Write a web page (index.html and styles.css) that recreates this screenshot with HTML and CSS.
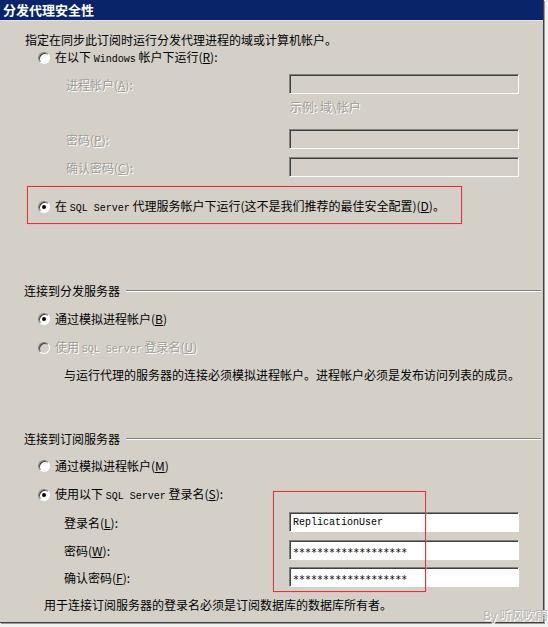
FILE: index.html
```html
<html>
	<head>
		<meta charset="utf-8">
		<title>分发代理安全性</title>
		<link rel="stylesheet" href="styles.css">
	</head>
	<body>
		<div class="dialog">
			<div class="caption">分发代理安全性</div>
			<div class="content">
				<div class="row intro">指定在同步此订阅时运行分发代理进程的域或计算机帐户。</div>
				<div class="row radio sub"><span class="dot"></span><span>在以下 <span class="en">Windows</span> 帐户下运行(<u>R</u>):</span></div>
				<div class="field first gap8"><span class="lbl off">进程帐户(<u>A</u>):</span><span class="box"></span></div>
				<div class="row hint off">示例: 域\帐户</div>
				<div class="field first gap14"><span class="lbl off">密码(<u>P</u>):</span><span class="box"></span></div>
				<div class="field first gap8"><span class="lbl off">确认密码(<u>C</u>):</span><span class="box"></span></div>
				<div class="mark agent">
					<div class="row radio checked"><span class="dot"></span><span>在 <span class="en">SQL Server</span> 代理服务帐户下运行(这不是我们推荐的最佳安全配置)(<u>D</u>)。</span></div>
				</div>

				<div class="row group dist">连接到分发服务器</div>
				<div class="row radio checked gap12"><span class="dot"></span><span>通过模拟进程帐户(<u>B</u>)</span></div>
				<div class="row radio disabled gap13"><span class="dot"></span><span class="off">使用 <span class="en">SQL Server</span> 登录名(<u>U</u>)</span></div>
				<div class="row note">与运行代理的服务器的连接必须模拟进程帐户。进程帐户必须是发布访问列表的成员。</div>

				<div class="row group subs">连接到订阅服务器</div>
				<div class="row radio gap11"><span class="dot"></span><span>通过模拟进程帐户(<u>M</u>)</span></div>
				<div class="row radio checked gap13"><span class="dot"></span><span>使用以下 <span class="en">SQL Server</span> 登录名(<u>S</u>):</span></div>
				<div class="field second gap9"><span class="lbl">登录名(<u>L</u>):</span><span class="box on">ReplicationUser</span></div>
				<div class="field second gap8"><span class="lbl">密码(<u>W</u>):</span><span class="box on secret">*******************</span></div>
				<div class="field second gap7"><span class="lbl">确认密码(<u>F</u>):</span><span class="box on secret">*******************</span></div>
				<div class="row footnote">用于连接订阅服务器的登录名必须是订阅数据库的数据库所有者。</div>
			</div>
			<div class="mark login"></div>
		</div>
		<div class="sign">By 听风吹雨</div>
	</body>
</html>
```

FILE: styles.css
```css
body,html{
	margin:0;
	background:#f2f2f0;
	font-family:"Noto Sans CJK SC", "DejaVu Sans", sans-serif;
	font-size:12px;
	color:#000;
}
.dialog{
	position:relative;
	width:543px;
	height:622px;
	background:#d4d0c8;
	border-right:1px solid #404040;
	border-bottom:1px solid #404040;
	box-shadow:1px 1px 0 #9a9a9a;
}
.caption{
	height:20px;
	line-height:20px;
	padding-left:3px;
	background:#0a246a;
	color:#fff;
	font-weight:bold;
	font-size:13px;
	border-bottom:1px solid #e6e4df;
}
.content{
	display:flex;
	flex-direction:column;
	align-items:flex-start;
}
.row{
	height:16px;
	line-height:16px;
	white-space:nowrap;
}
.en{
	font-family:"Liberation Mono", monospace;
	font-size:10px;
}
.off{
	color:#a09d96;
	text-shadow:1px 1px 0 #fff;
}
.intro{
	margin:11px 0 0 25px;
}
.sub{
	margin-top:2px;
}
.radio{
	display:flex;
	align-items:center;
	margin-left:38px;
}
.dot{
	position:relative;
	flex:none;
	width:12px;
	height:12px;
	margin-right:5px;
	box-sizing:border-box;
	border-radius:50%;
	background:#fff;
	border:1px solid;
	border-color:#808080 #fff #fff #808080;
	box-shadow:inset 1px 1px 0 #404040;
}
.disabled .dot{
	background:#d4d0c8;
}
.checked .dot::after{
	content:"";
	position:absolute;
	left:3px;
	top:3px;
	width:4px;
	height:4px;
	border-radius:50%;
	background:#000;
}
.field{
	display:flex;
	align-items:center;
	height:20px;
}
.field.first{
	margin-left:66px;
}
.field.first .lbl{
	width:223px;
}
.field.second{
	margin-left:64px;
}
.field.second .lbl{
	width:225px;
}
.box{
	width:230px;
	height:20px;
	box-sizing:border-box;
	border:1px solid;
	border-color:#808080 #fff #fff #808080;
	box-shadow:inset 1px 1px 0 #404040;
	padding:2px 0 0 3px;
	line-height:16px;
	font-family:"Liberation Mono", monospace;
	font-size:10px;
}
.box.on{
	background:#fff;
}
.box.secret{
	font-family:"DejaVu Sans Mono", monospace;
	font-size:10px;
	padding-top:4px;
}
.hint{
	margin:5px 0 0 290px;
}
.gap7{ margin-top:7px; }
.gap8{ margin-top:8px; }
.gap9{ margin-top:9px; }
.gap11{ margin-top:11px; }
.gap12{ margin-top:12px; }
.gap13{ margin-top:13px; }
.gap14{ margin-top:14px; }
.mark{
	border:1px solid #e1333b;
	box-shadow:0 0 2px #f3a5a8;
	box-sizing:border-box;
}
.agent{
	display:flex;
	align-items:center;
	width:435px;
	height:38px;
	margin:9px 0 0 27px;
	padding-top:4px;
}
.agent .radio{
	margin-left:10px;
}
.login{
	position:absolute;
	left:273px;
	top:491px;
	width:153px;
	height:101px;
}
.group{
	display:flex;
	align-items:center;
	align-self:stretch;
	margin:0 2px 0 24px;
}
.group::after{
	content:"";
	flex:1;
	margin-left:6px;
	border-top:1px solid #808080;
	border-bottom:1px solid #fff;
}
.dist{
	margin-top:59px;
}
.subs{
	margin-top:48px;
}
.note{
	margin:11px 0 0 64px;
}
.footnote{
	margin:10px 0 0 44px;
}
.sign{
	position:absolute;
	left:483px;
	top:606px;
	color:#b4b4b4;
	text-shadow:1px 1px 0 #fff;
	font-size:12px;
}
```
